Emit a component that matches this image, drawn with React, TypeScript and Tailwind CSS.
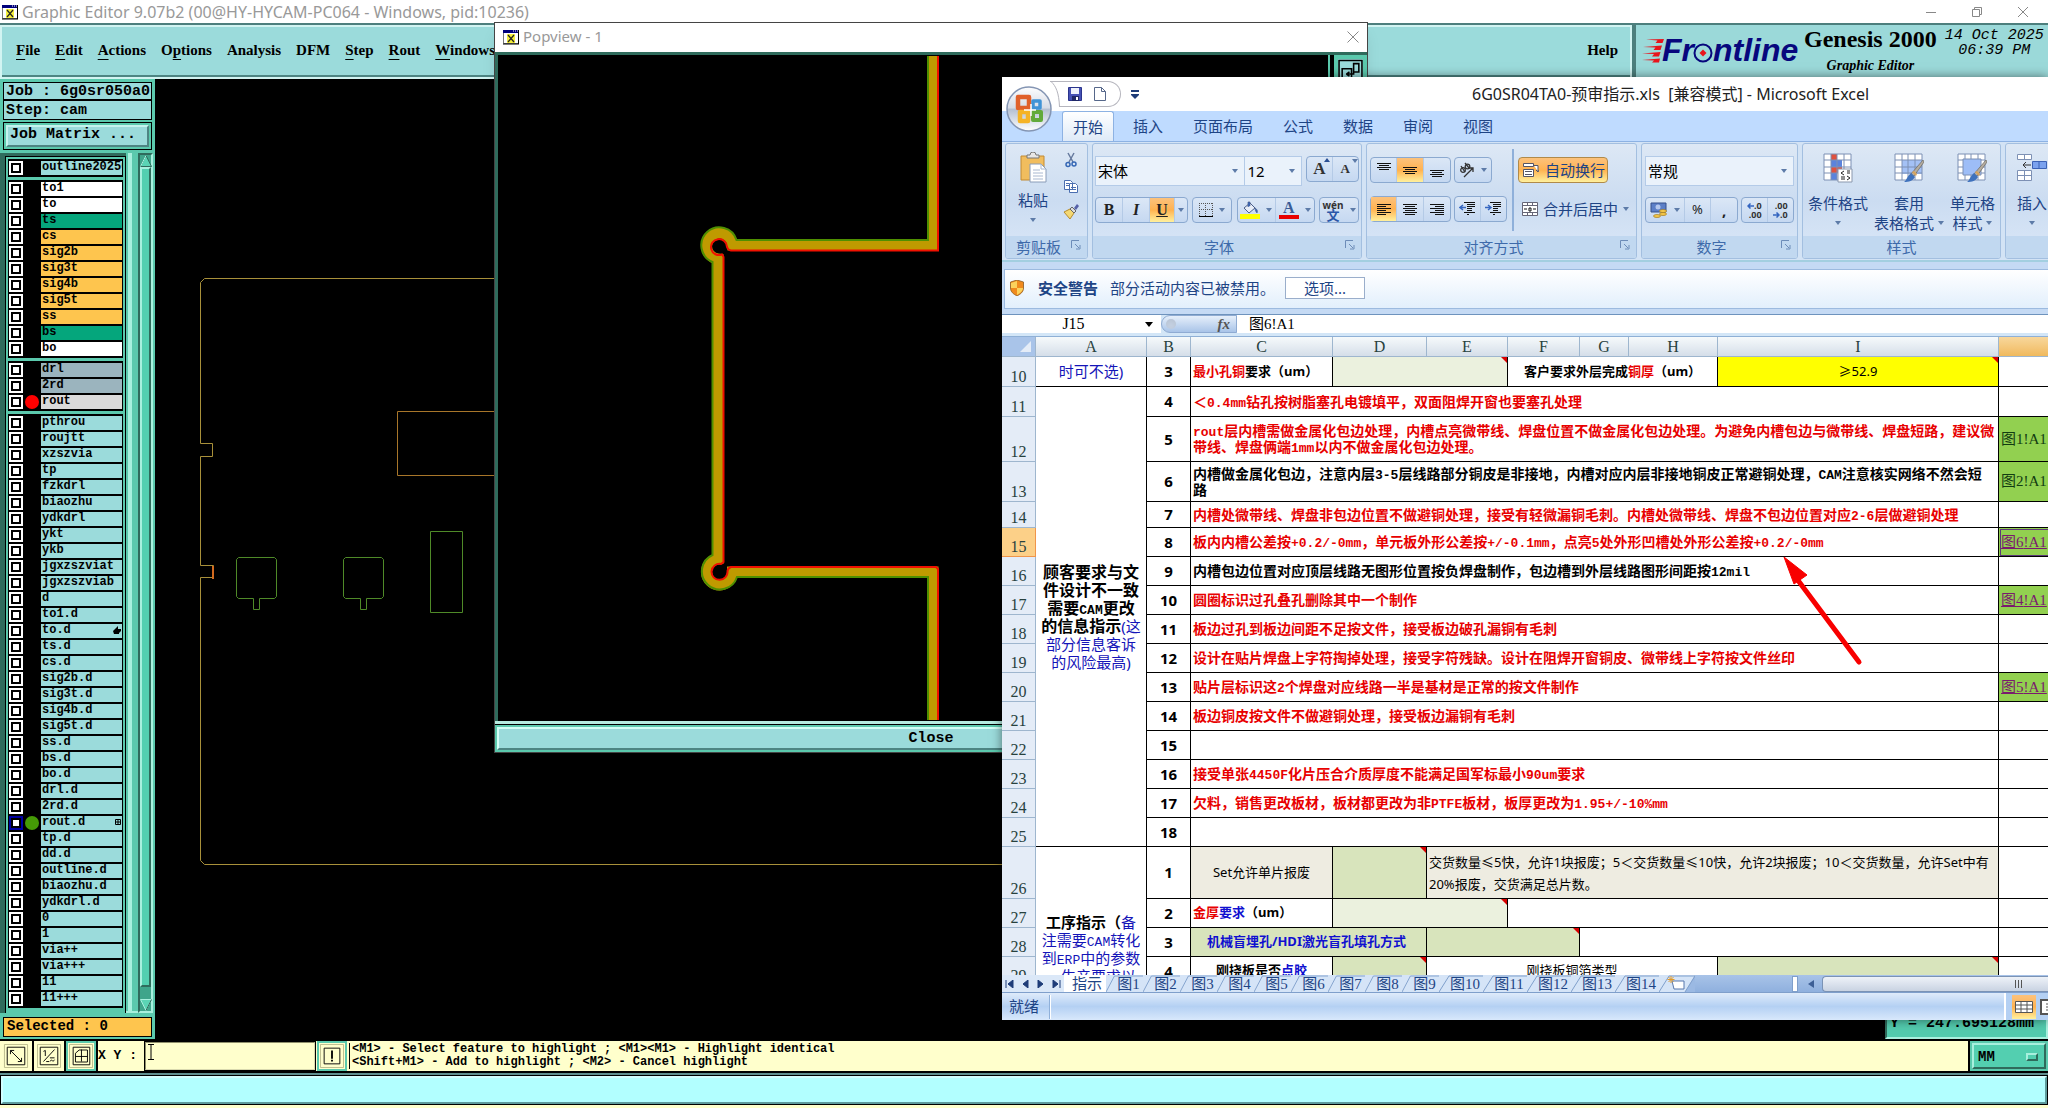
import { type ReactNode } from "react";

const ui = "font-['Noto_Sans','Noto_Sans_CJK_SC',sans-serif]";
const mono = "font-['Liberation_Mono',monospace]";
const serif = "font-['Liberation_Serif','Noto_Sans_CJK_SC',serif]";

type Layer = { name: string; color?: string; dot?: string; mark?: "hand" | "grid"; active?: boolean };

const white = "bg-white";
const green = "bg-[#05a67c]";
const amber = "bg-[#fec54e]";

const layerGroups: Layer[][] = [
  [{ name: "outline20250" }],
  [
    { name: "to1", color: white },
    { name: "to", color: white },
    { name: "ts", color: green },
    { name: "cs", color: amber },
    { name: "sig2b", color: amber },
    { name: "sig3t", color: amber },
    { name: "sig4b", color: amber },
    { name: "sig5t", color: amber },
    { name: "ss", color: amber },
    { name: "bs", color: green },
    { name: "bo", color: white },
  ],
  [
    { name: "drl", color: "bg-[#9bb4be]" },
    { name: "2rd", color: "bg-[#9bb4be]" },
    { name: "rout", color: "bg-[#dadada]", dot: "bg-[#ff0000]" },
  ],
  [
    { name: "pthrou" },
    { name: "roujtt" },
    { name: "xzszvia" },
    { name: "tp" },
    { name: "fzkdrl" },
    { name: "biaozhu" },
    { name: "ydkdrl" },
    { name: "ykt" },
    { name: "ykb" },
    { name: "jgxzszviat" },
    { name: "jgxzszviab" },
    { name: "d" },
    { name: "to1.d" },
    { name: "to.d", mark: "hand" },
    { name: "ts.d" },
    { name: "cs.d" },
    { name: "sig2b.d" },
    { name: "sig3t.d" },
    { name: "sig4b.d" },
    { name: "sig5t.d" },
    { name: "ss.d" },
    { name: "bs.d" },
    { name: "bo.d" },
    { name: "drl.d" },
    { name: "2rd.d" },
    { name: "rout.d", dot: "bg-[#459a06]", mark: "grid", active: true },
    { name: "tp.d" },
    { name: "dd.d" },
    { name: "outline.d" },
    { name: "biaozhu.d" },
    { name: "ydkdrl.d" },
    { name: "0" },
    { name: "1" },
    { name: "via++" },
    { name: "via+++" },
    { name: "11" },
    { name: "11+++" },
  ],
];

const menus: [string, string, string][] = [
  ["", "F", "ile"],
  ["", "E", "dit"],
  ["", "A", "ctions"],
  ["O", "p", "tions"],
  ["Analysis", "", ""],
  ["DFM", "", ""],
  ["", "S", "tep"],
  ["", "R", "out"],
  ["", "W", "indows"],
];

function AppIcon() {
  return (
    <svg viewBox="0 0 16 16" className="size-4 shrink-0">
      <path d="M0.500 1.500h15v13h-15z" fill="#fff" stroke="#777" />
      <path d="M0 1h15v3H0z" fill="#00007b" />
      <path d="M10 2h1m1 0h1m1 0h1" stroke="#fff" />
      <path d="M4 5h8v9H4z" fill="#f6f03c" />
      <path d="M5 6l6 7M11 6l-6 7" stroke="#222" strokeWidth="1.200" />
      <path d="M0 15h16M15.500 1v14" stroke="#000" />
    </svg>
  );
}

function TitleBar() {
  return (
    <div className={`flex h-[23px] shrink-0 items-center bg-white pl-0.5 text-[16px] text-[#999] ${ui}`}>
      <AppIcon />
      <h1 className="ml-1 flex-1 whitespace-nowrap">Graphic Editor 9.07b2 (00@HY-HYCAM-PC064 - Windows, pid:10236)</h1>
      <div className="flex items-center gap-9 pr-5 text-[#888]">
        <button aria-label="Minimize">
          <svg viewBox="0 0 10 10" className="size-2.5" stroke="currentColor">
            <path d="M0 5.500h10" />
          </svg>
        </button>
        <button aria-label="Restore">
          <svg viewBox="0 0 10 10" className="size-2.5" stroke="currentColor" fill="none">
            <path d="M0.500 2.500h7v7h-7zM2.500 2.500v-2h7v7h-2" />
          </svg>
        </button>
        <button aria-label="Close">
          <svg viewBox="0 0 10 10" className="size-2.5" stroke="currentColor">
            <path d="M0 0l10 10M10 0L0 10" />
          </svg>
        </button>
      </div>
    </div>
  );
}

function FrontlineLogo() {
  return (
    <svg viewBox="0 0 162 46" className="h-[46px] w-[162px] shrink-0" role="img" aria-label="Frontline">
      <g fill="#e8141c">
        <path d="M4 14.500L22 14l-1.500 4h-7l2-2.500z" />
        <path d="M1 22L20 20.500l-1.500 4.500h-7l2-2.500z" />
        <path d="M0 28.500L18.500 27 17 31.500h-7l2-2.500z" />
        <path d="M0 35L18 33.500l-1 4h-7l2-2z" />
      </g>
      <g fill="#07077d" className="font-['Liberation_Sans',sans-serif] font-bold italic" fontSize="32">
        <text x="20" y="36">Fr</text>
        <text x="71" y="36">ntline</text>
      </g>
      <circle cx="61" cy="28" r="8.500" fill="none" stroke="#07077d" strokeWidth="2" />
      <path d="M61 24.500l3.500 3.500-3.500 3.500-3.500-3.500z" fill="#e8141c" />
    </svg>
  );
}

function MenuBar() {
  return (
    <div className={`flex h-14 shrink-0 border-t-2 border-[#4d7f7d] bg-[#4d7f7d] font-bold text-black ${serif}`}>
      <nav className="flex flex-1 items-center gap-[15px] border-2 border-[#d2f4f2] bg-[#9bdbdb] px-3.5 pb-1 text-[15px] shadow-[inset_0_-2px_0_#4d8583]">
        {menus.map(([before, key, after]) => (
          <button key={before + key + after} className="whitespace-nowrap">
            {before}
            <span className={key ? "underline underline-offset-4" : ""}>{key}</span>
            {after}
          </button>
        ))}
        <button className="ml-auto -mr-0.5">Help</button>
      </nav>
      <div className="ml-1 flex w-[412px] bg-[#9bd9d9] pl-1.5">
        <FrontlineLogo />
        <div className="flex flex-col items-center leading-none whitespace-nowrap">
          <span className="pt-0.5 text-[24px]">Genesis 2000</span>
          <span className="pt-2 text-[14px] italic">Graphic Editor</span>
        </div>
        <div className={`ml-2 pt-[3px] text-center text-[15px] leading-[15px] font-normal whitespace-nowrap italic ${mono}`}>
          14 Oct 2025
          <br />
          06:39 PM
        </div>
      </div>
    </div>
  );
}

function LayerRow({ layer }: { layer: Layer }) {
  return (
    <label className="flex h-4 items-center">
      <input
        type="checkbox"
        className={`size-3.5 shrink-0 appearance-none border-2 bg-white shadow-[inset_0_0_0_2px_#000] ${layer.active ? "border-[#0000a0]" : "border-white"}`}
      />
      <span className="flex w-[18px] shrink-0 justify-center">
        {layer.dot && <span className={`size-3.5 rounded-full ${layer.dot}`} />}
      </span>
      <span
        className={`flex h-3.5 w-[81px] items-center justify-between overflow-hidden px-px pb-0.5 text-[12px] leading-[14px] ${layer.color ?? "bg-[#9bdbdb]"}`}
      >
        {layer.name}
        {layer.mark === "hand" && (
          <svg viewBox="0 0 8 8" className="size-2 shrink-0">
            <path d="M0 5l5-5v3h3v2L6 7v1H1z" />
          </svg>
        )}
        {layer.mark === "grid" && (
          <svg viewBox="0 0 6 6" className="size-1.5 shrink-0" fill="none" stroke="#000">
            <path d="M.5.5h5v5h-5zM3 0v6M0 3h6" />
          </svg>
        )}
      </span>
    </label>
  );
}

function LayerPanel() {
  return (
    <aside className={`flex w-[155px] shrink-0 flex-col bg-[#5bc9ad] px-[3px] pt-[3px] pb-0.5 font-bold text-black ${mono}`}>
      <div className="border border-black bg-[#9bdbdb] text-[15px] whitespace-nowrap">
        <div className="h-[18px] border-b-2 border-black pl-0.5 leading-[17px]">Job : 6g0sr050a0</div>
        <div className="h-[18px] pl-0.5 leading-5">Step: cam</div>
      </div>
      <div className="mt-0.5 border border-black p-0.5">
        <button className="block h-[22px] w-full border-2 border-t-[#c5f3ee] border-r-[#4d8583] border-b-[#4d8583] border-l-[#c5f3ee] bg-[#9bdbdb] pb-0.5 pl-0.5 text-left text-[15px] leading-4">
          Job Matrix ...
        </button>
      </div>
      <div className="-mx-[3px] mt-[3px] flex flex-1">
        <div className="w-[5px] bg-[#2f6b5c]" />
        <div className="flex flex-1 flex-col border-t-[3px] border-[#2f6b5c]">
          <div className="flex flex-1 flex-col gap-[3px] border-x border-t border-black bg-[#5bc9ad] px-0.5 pt-0.5">
            {layerGroups.map((group, i) => (
              <div key={i} className="bg-black py-px pl-px">
                {group.map((layer) => (
                  <LayerRow key={layer.name} layer={layer} />
                ))}
              </div>
            ))}
          </div>
        </div>
        <div className="flex w-3 border-b-2 border-[#a8f0de]">
          <div className="ml-0.5 w-1 bg-[#a8f0de]" />
        </div>
        <div className="mr-0.5 flex w-[15px] flex-col items-center border-2 border-t-[#2f6b5c] border-r-[#a8f0de] border-b-[#a8f0de] border-l-[#2f6b5c] bg-[#3fa58b]">
          <svg viewBox="0 0 12 12" className="size-3">
            <path d="M6 0.500L11.500 11.500h-11z" fill="#5bd4b5" stroke="#2f6b5c" />
            <path d="M6 0.500L.5 11.500" stroke="#a8f0de" />
          </svg>
          <div className="mb-3 w-full flex-1 border-2 border-t-[#a8f0de] border-r-[#2f6b5c] border-b-[#2f6b5c] border-l-[#a8f0de] bg-[#53cfb0]" />
          <svg viewBox="0 0 12 12" className="size-3">
            <path d="M0.500 .5h11L6 11.500z" fill="#5bd4b5" stroke="#a8f0de" />
            <path d="M11.500 .5L6 11.500" stroke="#2f6b5c" />
          </svg>
        </div>
      </div>
      <div className="mt-1 h-5 border border-black bg-[#fec54e] pl-[3px] text-[14px] leading-[16px]">Selected : 0</div>
    </aside>
  );
}

function BoardCanvas() {
  return (
    <main className="relative flex flex-1 items-end justify-end bg-black">
      <svg viewBox="155 80 850 958" className="absolute top-0 left-0 h-[958px] w-[850px]" fill="none">
        <path
          d="M1005 279.500H204.500l-4 4V444.500h12v13h-12V566.500h13v12h-13V861.500l4 4H1005"
          stroke="#a8903a"
        />
        <path d="M213 567v13" stroke="#d2691e" strokeWidth="2" />
        <path d="M500 412.500H397.500V476.500H500" stroke="#a8762a" />
        <g stroke="#4f8a28">
          <path d="M238.500 558.500h36l2 2v37l-2 2h-15v11h-6v-11h-15l-2-2v-37z" />
          <path d="M345.500 558.500h36l2 2v37l-2 2h-15v11h-6v-11h-15l-2-2v-37z" />
          <path d="M430.500 532.500h32v81h-32z" />
        </g>
      </svg>
      <output
        className={`h-8 w-[163px] border-2 border-t-[#2f6b5c] border-r-[#a8f0de] border-b-[#a8f0de] border-l-[#2f6b5c] bg-[#53cbae] pt-1 pl-[3px] text-[15px] font-bold whitespace-nowrap text-black ${mono}`}
      >
        Y = 247.695128mm
      </output>
    </main>
  );
}

function CommandBar() {
  return (
    <div className={`flex h-[34px] shrink-0 gap-0.5 border-y-2 border-black bg-black font-bold text-black ${mono}`}>
      <button aria-label="Zoom area" className="w-8 border-2 border-[#ffffcc] bg-[#ffffcc] p-px">
        <svg viewBox="0 0 26 26" className="h-full w-full" fill="none" stroke="#000">
          <path d="M0.500.5h25v25H.5z" stroke="#b9b98a" />
          <path d="M3.500 3.500h19v19h-19zM7 7l12 12M7 11V7h4M19 15v4h-4" />
        </svg>
      </button>
      <button aria-label="Pan" className="w-[30px] border-2 border-[#ffffcc] bg-[#ffffcc] p-px">
        <svg viewBox="0 0 26 26" className="h-full w-full" fill="none" stroke="#000">
          <path d="M0.500.5h25v25H.5z" stroke="#b9b98a" />
          <path d="M3.500 3.500h19v19h-19zM7 19L19 6M7 8l2-1v6M14 15h5M14 19c2-4 3 2 5-2M10 19h3" />
        </svg>
      </button>
      <button aria-label="Grid" className="w-[30px] border-2 border-[#5bc9ad] bg-[#ffffcc] p-px">
        <svg viewBox="0 0 26 26" className="h-full w-full" fill="none" stroke="#000">
          <path d="M0.500.5h25v25H.5z" stroke="#b9b98a" />
          <path d="M4.500 3.500h18v19h-18zM11 6.500h9v13H7V10zM7 13.500h13M13.500 6v13" />
        </svg>
      </button>
      <div className="flex flex-1 items-center bg-[#ffffcc]">
        <label htmlFor="xy" className="w-[46px] text-[13px] whitespace-pre">
          X Y :
        </label>
        <input
          id="xy"
          defaultValue=""
          className="h-[30px] w-[172px] border-2 border-t-[#8f8f6c] border-r-[#d9d9ae] border-b-[#d9d9ae] border-l-[#8f8f6c] bg-[#ffffcc] outline-1 -outline-offset-1 outline-black"
        />
        <svg viewBox="0 0 6 16" className="-ml-[168px] mb-2 h-4 w-1.5 shrink-0" fill="none" stroke="#000">
          <path d="M0 .5h6M0 15.500h6M3 0v16" />
        </svg>
        <button aria-label="Alert" className="ml-[163px] h-[30px] w-[30px] shrink-0 border-2 border-[#5bc9ad] bg-[#ffffcc] p-px">
          <svg viewBox="0 0 26 26" className="h-full w-full" fill="none" stroke="#000">
            <path d="M0.500.5h25v25H.5z" stroke="#b9b98a" />
            <path d="M4.500 4.500h17v17h-17z" />
            <path d="M13 7v9M13 17v2" strokeWidth="2" />
          </svg>
        </button>
        <div className="ml-0.5 flex-1 border-l border-black pl-0.5 text-[12px] leading-[13px] whitespace-pre">
          {"<M1> - Select feature to highlight ; <M1><M1> - Highlight identical\n<Shift+M1> - Add to highlight ; <M2> - Cancel highlight"}
        </div>
      </div>
      <div className="w-[78px] bg-[#5bc9ad] p-0.5">
        <div className="relative h-full border-2 border-t-[#a8f0de] border-r-[#2f6b5c] border-b-[#2f6b5c] border-l-[#a8f0de] bg-[#53cfb0]">
          <select aria-label="Units" className="h-full w-full appearance-none pl-1 text-[14px]">
            <option>MM</option>
          </select>
          <span className="pointer-events-none absolute top-2 right-1.5 h-2 w-3 border-2 border-t-[#a8f0de] border-r-[#2f6b5c] border-b-[#2f6b5c] border-l-[#a8f0de]" />
        </div>
      </div>
    </div>
  );
}

function Popview() {
  return (
    <section className="absolute top-[22px] left-[494px] flex h-[731px] w-[874px] flex-col border border-[#444] bg-black shadow-lg">
      <div className={`flex h-[29px] shrink-0 items-center bg-white pr-2 pb-0.5 pl-2 text-[15px] text-[#999] ${ui}`}>
        <AppIcon />
        <h2 className="ml-1 flex-1">Popview - 1</h2>
        <button aria-label="Close">
          <svg viewBox="0 0 12 12" className="size-3" stroke="#888">
            <path d="M.5.5l11 11M11.500.5l-11 11" />
          </svg>
        </button>
      </div>
      <div className="flex flex-1 border-t-[3px] border-l-[3px] border-[#2f6b5c]">
        <div className="flex-1 border-r-2 border-[#5bc9ad]">
          <svg viewBox="498 55 830 666" className="h-[666px] w-[830px]" fill="none">
            <path
              d="M933 56V245H732.500A13 13 0 1 0 718 259V559A13 13 0 1 0 732.500 572H933V720"
              stroke="#bf9a00"
              strokeWidth="11"
            />
            <path
              d="M928 56V240H736.500A18 18 0 1 0 712.500 262V555A18 18 0 1 0 737 577H928V720"
              stroke="#4f8f00"
              strokeWidth="2"
            />
            <path
              d="M938 56V250.500H731Q728 250 727 247A8 8 0 1 0 722 254.500L723.500 257V562L721 564A8 8 0 1 0 727.500 571Q728 568 731 567H936L938 569V720"
              stroke="#f01000"
              strokeWidth="2"
            />
          </svg>
        </div>
        <button aria-label="Swap view" className="ml-1 h-9 w-[33px] border-4 border-[#5bc9ad] bg-[#9bdbdb]">
          <svg viewBox="0 0 24 26" className="h-full w-full" fill="none" stroke="#000" strokeWidth="1.500">
            <path d="M1 1h22v24H1zM4 9h9v10H4zM15 4h5v8h-5zM8 14h7V8M8 14l3-2M8 14l3 2" />
          </svg>
        </button>
      </div>
      <div className="shrink-0 border-t-[3px] border-[#b5ece0] bg-black pt-px">
        <div className="border-2 border-[#5bc9ad]">
          <button
            className={`block h-[23px] w-full border-2 border-t-[#d2fff6] border-r-[#4d8583] border-b-[#4d8583] border-l-[#d2fff6] bg-[#9bdbdb] text-[15px] leading-[18px] font-bold text-black ${mono}`}
          >
            Close
          </button>
        </div>
      </div>
    </section>
  );
}

// ---- spreadsheet window ----

const box = "flex h-[26px] items-center rounded-sm border border-[#8ba9d0] bg-linear-to-b from-[#dbe7f6] to-[#c5d8f1] divide-x divide-[#b4cae6]";
const hot = "bg-linear-to-b from-[#fcc27c] via-[#ffb24f] to-[#fff09c]";

function Caret({ className = "" }: { className?: string }) {
  return (
    <svg viewBox="0 0 6 4" className={`h-1 w-1.5 shrink-0 ${className}`}>
      <path d="M0 0h6L3 4z" fill="#5d7ba8" />
    </svg>
  );
}

function IconButton({ label, className = "", children }: { label: string; className?: string; children: ReactNode }) {
  return (
    <button aria-label={label} className={`flex h-6 items-center justify-center gap-1.5 ${className}`}>
      {children}
    </button>
  );
}

function Group({ title, className, launcher = true, children }: { title: string; className: string; launcher?: boolean; children: ReactNode }) {
  return (
    <section className={`flex h-[116px] shrink-0 flex-col overflow-hidden rounded-[3px] border border-[#a3bfe0] bg-linear-to-b from-[#dde8f5] via-[#cbdcf1] to-[#dbe8f8] ${className}`}>
      <div className="h-[92px] shrink-0">{children}</div>
      <div className="flex h-[22px] items-center bg-[#c1d8f0] text-[15px] text-[#3e6aaa]">
        <h3 className="flex-1 text-center whitespace-nowrap">{title}</h3>
        {launcher && (
          <svg viewBox="0 0 10 10" className="mr-1.5 mb-1 size-2.5 shrink-0" fill="none" stroke="#6d8cb8">
            <path d="M0.500 8V.5H8M4 4l4 4M9 5v4H5" />
          </svg>
        )}
      </div>
    </section>
  );
}

function Lines({ widths, top = 4 }: { widths: [number, number][]; top?: number }) {
  return (
    <svg viewBox="0 0 16 18" className="h-[18px] w-4" stroke="#111" strokeWidth="1">
      {widths.map(([from, to], i) => (
        <path key={i} d={`M${from} ${top + i * 2 + 0.5}H${to}`} />
      ))}
    </svg>
  );
}

const short: [number, number][] = [[1, 15], [3, 13], [1, 15], [3, 13]];
const leftLines: [number, number][] = [[1, 15], [1, 10], [1, 15], [1, 10], [1, 15], [1, 10]];
const centerLines: [number, number][] = [[1, 15], [3, 13], [1, 15], [3, 13], [1, 15], [3, 13]];
const rightLines: [number, number][] = [[1, 15], [6, 15], [1, 15], [6, 15], [1, 15], [6, 15]];

function IndentIcon({ flip = false }: { flip?: boolean }) {
  return (
    <svg viewBox="0 0 16 14" className="h-3.5 w-4" stroke="#111" fill="none">
      <path d="M5 .5h11M8 2.500h8M8 4.500h8M8 6.500h5M8 8.500h5M5 10.500h11M8 12.500h2" />
      <path d={flip ? "M0 5.500h5M3 3l3 2.500L3 8" : "M1 5.500h6M4 3L1 5.500 4 8"} stroke="#3566c0" strokeWidth="1.500" />
    </svg>
  );
}

function Combo({ label, value, className }: { label: string; value: string; className: string }) {
  return (
    <div className={`relative h-[30px] border border-[#b4cbe8] bg-[#eaf2fb] ${className}`}>
      <select aria-label={label} className="h-full w-full appearance-none pl-0.5 text-[15px] text-black">
        <option>{value}</option>
      </select>
      <Caret className="pointer-events-none absolute top-3 right-1.5" />
    </div>
  );
}

function GridIcon({ kind }: { kind: "cond" | "table" | "cell" }) {
  return (
    <svg viewBox="0 0 30 30" className="size-[30px]">
      <path d="M1 1h27v26H1z" fill="#fff" />
      {kind === "cond" && (
        <>
          <path d="M8 1h6v6H8zM8 14h11v6H8z" fill="#e0523f" />
          <path d="M8 7h11v7H8zM8 20h6v7H8z" fill="#5b83dc" />
        </>
      )}
      {kind === "table" && <path d="M8 7h20v14H8z" fill="#a4c1f5" />}
      <path d="M1 1h27v26H1zM1 7h27M1 14h27M1 20h27M8 1v26M14 1v26M21 1v26" fill="none" stroke="#7d90b4" />
      {kind === "cell" && <path d="M6 6h18v16H6z" fill="#9dbdf7" stroke="#7d90b4" />}
      {kind === "cond" ? (
        <>
          <path d="M15 16h14v13H15z" fill="#fff" stroke="#8a97ad" />
          <path d="M21 18l-3 2 3 2M18 24h4M18 26h4M24 18h3M24 20h3M24 23l3 2-3 2" fill="none" stroke="#222" />
        </>
      ) : (
        <>
          <path d="M29 7l1 2-10 14-3-2z" fill="#b5ada0" stroke="#6a655c" strokeWidth=".7" />
          <path d="M17 20l4 4c-2 4-6 5-11 5 3-2 3-6 7-9z" fill="#3f72bd" />
          <path d="M18 19l4 4 1-2-3-3z" fill="#d9a45c" />
        </>
      )}
    </svg>
  );
}

function Ribbon() {
  return (
    <div className="flex h-[121px] shrink-0 gap-1 overflow-hidden border-t border-b-2 border-t-[#8db2e3] border-b-[#a3cfe0] bg-[#d3e3f5] px-[3px] pt-px text-[15px] text-[#1e4485]">
      <Group title="剪贴板" className="w-[83px]">
        <div className="flex justify-between pt-2 pr-2 pl-3">
          <button className="flex flex-col items-center">
            <svg viewBox="0 0 30 32" className="h-8 w-[30px]">
              <path d="M3 4h23v24H3z" fill="#f1bd5e" stroke="#c28a33" />
              <path d="M9 6V3h3a3 3 0 0 1 6 0h3v3z" fill="#e7e7e7" stroke="#777" />
              <path d="M12 12h11l5 5v13H12z" fill="#fff" stroke="#8a9cb8" />
              <path d="M23 12v5h5M15 18h7M15 21h10M15 24h10M15 27h10" fill="none" stroke="#a9b8d0" />
            </svg>
            <span className="mt-1 leading-6">粘贴</span>
            <Caret className="mt-1.5" />
          </button>
          <div className="flex flex-col gap-2.5">
            <button aria-label="剪切">
              <svg viewBox="0 0 16 16" className="size-4" fill="none" stroke="#3567b5" strokeWidth="1.500">
                <path d="M5 1l5 9M11 1L6 10" stroke="#667a9e" />
                <circle cx="5" cy="12.500" r="2" />
                <circle cx="11" cy="12" r="2" />
              </svg>
            </button>
            <button aria-label="复制">
              <svg viewBox="0 0 16 16" className="size-4" fill="#fff" stroke="#4a6eb0">
                <path d="M1.500 2.500h6l2 2v7h-8zM6.500 5.500h6l2 2v7h-8z" />
                <path d="M3 5.500h3M3 7.500h3M8 9.500h5M8 11.500h5" />
              </svg>
            </button>
            <button aria-label="格式刷">
              <svg viewBox="0 0 16 16" className="size-4">
                <path d="M1 8l6-3 4 4-4 6z" fill="#f4d873" stroke="#b58a2c" />
                <path d="M7 5l2-2 4 4-2 2z" fill="#dcdcdc" stroke="#666" />
                <path d="M11 4l3-4 2 2-3 4z" fill="#5460a8" />
              </svg>
            </button>
          </div>
        </div>
      </Group>

      <Group title="字体" className="w-[270px]">
        <div className="flex flex-col gap-[11px] px-0.5 pt-3">
          <div className="flex">
            <Combo label="字体名称" value="宋体" className="w-[151px]" />
            <Combo label="字号" value="12" className="w-[57px] border-l-0" />
            <div className={`${box} ml-1 w-[53px] ${serif} font-bold text-[#333]`}>
              <IconButton label="增大字号" className="w-1/2 text-[17px]">
                <span className="relative">
                  A
                  <svg viewBox="0 0 6 4" className="absolute top-0.5 -right-1 h-1 w-1.5">
                    <path d="M0 4h6L3 0z" fill="#2a4f94" />
                  </svg>
                </span>
              </IconButton>
              <IconButton label="减小字号" className="w-1/2 text-[13px]">
                <span className="relative">
                  A<Caret className="absolute top-0 -right-2" />
                </span>
              </IconButton>
            </div>
          </div>
          <div className="flex justify-between">
            <div className={`${box} w-[93px] ${serif} text-[16px] font-bold text-[#222]`}>
              <IconButton label="加粗" className="w-[27px]">B</IconButton>
              <IconButton label="倾斜" className="w-[27px] italic">I</IconButton>
              <IconButton label="下划线" className={`w-[25px] underline ${hot}`}>U</IconButton>
              <IconButton label="下划线样式" className="w-3"><Caret /></IconButton>
            </div>
            <div className={`${box} w-10`}>
              <IconButton label="边框" className="w-full">
                <svg viewBox="0 0 14 14" className="size-3.5" stroke="#555" strokeDasharray="1 1">
                  <path d="M0 .5h14M0 6.500h14M.5 0v13M6.500 0v13M13.500 0v13" />
                  <path d="M0 13.500h14" stroke="#000" strokeDasharray="none" />
                </svg>
                <Caret />
              </IconButton>
            </div>
            <div className={`${box} w-[78px]`}>
              <IconButton label="填充颜色" className="w-[39px]">
                <svg viewBox="0 0 20 18" className="h-[18px] w-5">
                  <path d="M4 7l6-5 5 5-6 5z" fill="#e8eef8" stroke="#4a5f8a" />
                  <path d="M8 6V1h2v4M15 7c2 1 3 3 2 5-1-1-2-3-2-5z" fill="#3566c0" stroke="#4a5f8a" strokeWidth=".7" />
                  <path d="M0 13h20v5H0z" fill="#ffff00" />
                </svg>
                <Caret />
              </IconButton>
              <IconButton label="字体颜色" className="w-[39px]">
                <span className={`flex w-5 flex-col items-center text-[16px] leading-[14px] font-bold text-[#3a5c96] ${serif}`}>
                  A
                  <span className="h-1 w-full bg-[#e80000]" />
                </span>
                <Caret />
              </IconButton>
            </div>
            <div className={`${box} w-10`}>
              <IconButton label="拼音" className="w-full">
                <span className="text-center text-[10px] leading-[10px] font-bold text-[#333]">
                  wén
                  <br />
                  <span className="text-[13px] text-[#2a56a8]">文</span>
                </span>
                <Caret />
              </IconButton>
            </div>
          </div>
        </div>
      </Group>

      <Group title="对齐方式" className="w-[271px]">
        <div className="flex pt-[13px] pl-[3px]">
          <div className="flex flex-col gap-[13px]">
            <div className="flex gap-[3px]">
              <div className={`${box} w-[81px]`}>
                <IconButton label="顶端对齐" className="w-[27px]"><Lines widths={short} top={2} /></IconButton>
                <IconButton label="垂直居中" className={`w-[27px] ${hot}`}><Lines widths={short} top={6} /></IconButton>
                <IconButton label="底端对齐" className="w-[27px]"><Lines widths={short} top={9} /></IconButton>
              </div>
              <div className={`${box} w-[38px]`}>
                <IconButton label="方向" className="w-full">
                  <svg viewBox="0 0 16 16" className="size-4" fill="none" stroke="#333" strokeWidth="1.300">
                    <circle cx="4" cy="8" r="2.300" />
                    <circle cx="8.500" cy="4.500" r="2.300" />
                    <path d="M2 4l4 6M6 1l4 5M5 15L14 6M14 10V6h-4" />
                  </svg>
                  <Caret />
                </IconButton>
              </div>
            </div>
            <div className="flex gap-[3px]">
              <div className={`${box} w-[81px]`}>
                <IconButton label="左对齐" className={`w-[27px] ${hot}`}><Lines widths={leftLines} /></IconButton>
                <IconButton label="居中" className="w-[27px]"><Lines widths={centerLines} /></IconButton>
                <IconButton label="右对齐" className="w-[27px]"><Lines widths={rightLines} /></IconButton>
              </div>
              <div className={`${box} w-[53px]`}>
                <IconButton label="减少缩进" className="w-[26px]"><IndentIcon /></IconButton>
                <IconButton label="增加缩进" className="w-[26px]"><IndentIcon flip /></IconButton>
              </div>
            </div>
          </div>
          <div className="-mt-2 mr-1 ml-[5px] h-[82px] w-0.5 bg-[#8fb0da]" />
          <div className="flex flex-col gap-[13px]">
            <button className={`flex h-[26px] w-[90px] items-center gap-1.5 rounded-sm border border-[#b08a4a] pl-1 whitespace-nowrap ${hot}`}>
              <svg viewBox="0 0 16 16" className="size-4 shrink-0" fill="#fff" stroke="#556">
                <path d="M0.500 1.500h10v3h-10zM.5 7.500h10v7h-10zM2 9.500h7M2 12.500h7M11 3.500h4v6M13 8l2 2 1-2" />
              </svg>
              自动换行
            </button>
            <button className="flex h-[26px] items-center gap-[5px] pl-1 whitespace-nowrap">
              <svg viewBox="0 0 16 16" className="size-4 shrink-0" fill="#fff" stroke="#667">
                <path d="M.5 1.500h15v13H.5zM.5 4.500h15M.5 11.500h15M5.500 1v3M10.500 1v3M5.500 12v3M10.500 12v3" />
                <path d="M2 8h3M11 8h3M7 7h2v3H7z" stroke="#111" />
              </svg>
              合并后居中
              <Caret />
            </button>
          </div>
        </div>
      </Group>

      <Group title="数字" className="w-[157px]">
        <div className="flex flex-col gap-[11px] px-[3px] pt-3">
          <Combo label="数字格式" value="常规" className="w-full" />
          <div className="flex justify-between">
            <div className={`${box} w-[93px] text-[15px] text-[#222]`}>
              <IconButton label="会计数字格式" className="w-[39px]">
                <svg viewBox="0 0 18 18" className="size-[18px]">
                  <path d="M1 2h15v9H1z" fill="#5c7fc7" stroke="#34508c" />
                  <circle cx="8" cy="6" r="2.500" fill="#b5c8ee" />
                  <ellipse cx="13" cy="10" rx="3.500" ry="1.500" fill="#f5c84a" stroke="#a37a1c" strokeWidth=".7" />
                  <ellipse cx="13" cy="13" rx="3.500" ry="1.500" fill="#f5c84a" stroke="#a37a1c" strokeWidth=".7" />
                  <ellipse cx="7" cy="15" rx="3.500" ry="1.500" fill="#f5c84a" stroke="#a37a1c" strokeWidth=".7" />
                </svg>
                <Caret />
              </IconButton>
              <IconButton label="百分比样式" className="w-[27px] text-[13px]">%</IconButton>
              <IconButton label="千位分隔样式" className="w-[26px] font-bold">,</IconButton>
            </div>
            <div className={`${box} w-[53px] text-[9px] font-bold text-[#333]`}>
              <IconButton label="增加小数位数" className="w-[26px]">
                <span className="flex flex-col items-end leading-[9px]">
                  <span className="flex items-center">
                    <svg viewBox="0 0 7 6" className="h-1.5 w-[7px]" fill="none" stroke="#3566c0" strokeWidth="1.500">
                      <path d="M7 3H1M3.500.5L1 3l2.500 2.500" />
                    </svg>
                    .0
                  </span>
                  <span>.00</span>
                </span>
              </IconButton>
              <IconButton label="减少小数位数" className="w-[26px]">
                <span className="flex flex-col items-end leading-[9px]">
                  <span>.00</span>
                  <span className="flex items-center">
                    <svg viewBox="0 0 7 6" className="h-1.5 w-[7px]" fill="none" stroke="#3566c0" strokeWidth="1.500">
                      <path d="M0 3h6M3.500.5L6 3 3.500 5.500" />
                    </svg>
                    .0
                  </span>
                </span>
              </IconButton>
            </div>
          </div>
        </div>
      </Group>

      <Group title="样式" className="w-[199px]" launcher={false}>
        <div className="flex justify-between px-[5px] pt-[9px] leading-5 whitespace-nowrap">
          <button className="flex flex-col items-center">
            <GridIcon kind="cond" />
            <span className="mt-2.5">条件格式</span>
            <Caret className="mt-2" />
          </button>
          <button className="flex flex-col items-center">
            <GridIcon kind="table" />
            <span className="mt-2.5">套用</span>
            <span className="flex items-center gap-1">表格格式<Caret /></span>
          </button>
          <button className="flex flex-col items-center">
            <GridIcon kind="cell" />
            <span className="mt-2.5">单元格</span>
            <span className="flex items-center gap-1">样式<Caret /></span>
          </button>
        </div>
      </Group>

      <Group title="" className="w-[180px]" launcher={false}>
        <button className="ml-[11px] flex flex-col items-center pt-[9px] leading-5">
          <svg viewBox="0 0 30 30" className="size-[30px]" fill="#fff" stroke="#7d90b4">
            <path d="M.5 1.500h14v5H.5zM7.500 1v6M.5 17.500h14v10H.5zM7.500 17v11M.5 22.500h14" />
            <path d="M15.500 8.500h14v7h-14zM22 8v8" fill="#7ba2ee" stroke="#3c62b5" />
            <path d="M6 12h8M9 9l-3 3 3 3" stroke="#333" fill="none" />
          </svg>
          <span className="mt-2.5">插入</span>
          <Caret className="mt-2" />
        </button>
      </Group>
    </div>
  );
}

function OfficeButton() {
  return (
    <button aria-label="Office" className="absolute top-[9px] left-1 z-10 size-[46px]">
      <svg viewBox="0 0 46 46" className="size-full">
        <defs>
          <linearGradient id="orb" x1="0" y1="0" x2="0" y2="1">
            <stop offset="0" stopColor="#fdfdfe" />
            <stop offset=".48" stopColor="#d5dbe6" />
            <stop offset=".5" stopColor="#b3bfd1" />
            <stop offset="1" stopColor="#fff" />
          </linearGradient>
        </defs>
        <circle cx="23" cy="23" r="22" fill="url(#orb)" stroke="#8495b3" strokeWidth="1.500" />
        <g fill="none" strokeWidth="4.500" strokeLinejoin="round">
          <path d="M12 11h11v11H12z" stroke="#e0602a" />
          <path d="M27 15h7v7h-7z" stroke="#3f93d6" strokeWidth="3.500" />
          <path d="M14 26h8v9h-8z" stroke="#f5b325" />
          <path d="M27 26h8v8h-8z" stroke="#62aa3a" strokeWidth="4" />
        </g>
        <path d="M18 24h12M25 18v12" stroke="#fff" strokeWidth="1.500" />
      </svg>
    </button>
  );
}

function ExcelTitle() {
  return (
    <div className="flex h-[34px] shrink-0 items-center bg-white pl-12">
      <svg viewBox="0 0 10 26" className="h-[26px] w-2.5" fill="none" stroke="#b5b5bd">
        <path d="M0 .5h10M1 .5C6 5 9 12 9.500 26" />
      </svg>
      <div className="flex h-[26px] w-[61px] items-center gap-3 rounded-r-full border border-l-0 border-[#b5b5bd] pl-2">
        <button aria-label="保存">
          <svg viewBox="0 0 14 14" className="size-3.5">
            <path d="M.5.5h13v13H.5z" fill="#4651b5" stroke="#2b348c" />
            <path d="M3 1h8v6H3z" fill="#eef1fb" />
            <path d="M4 9h7v5H4z" fill="#1f2766" />
            <path d="M8 10h2v3H8z" fill="#fff" />
          </svg>
        </button>
        <button aria-label="新建">
          <svg viewBox="0 0 12 14" className="h-3.5 w-3" fill="#fff" stroke="#56678a">
            <path d="M.5.5h7l4 4v9H.5zM7.500.5v4h4" />
          </svg>
        </button>
      </div>
      <button aria-label="自定义快速访问工具栏" className="ml-2.5">
        <svg viewBox="0 0 8 9" className="h-[9px] w-2" fill="#1e3c78">
          <path d="M0 0h8v2H0zM0 4h8v1L4 9 0 5z" />
        </svg>
      </button>
      <h2 className="ml-[333px] text-[16px] whitespace-pre text-[#222]">6G0SR04TA0-预审指示.xls  [兼容模式] - Microsoft Excel</h2>
    </div>
  );
}

function RibbonTabs() {
  return (
    <div className="flex h-[30px] shrink-0 bg-[#bfdbff] pl-[60px] text-[15px] text-[#1e4485]">
      <button className="h-[31px] w-[52px] rounded-t-[3px] border border-b-0 border-[#8db2e3] bg-linear-to-b from-white to-[#dde9f7]">开始</button>
      <div className="flex gap-[30px] pl-[19px]">
        {["插入", "页面布局", "公式", "数据", "审阅", "视图"].map((tab) => (
          <button key={tab}>{tab}</button>
        ))}
      </div>
    </div>
  );
}

function SecurityBar() {
  return (
    <div className="h-[52px] shrink-0 bg-[#c5daf4] pt-[7px] pb-[5px] pl-0.5">
      <div className="flex h-10 items-center border border-r-0 border-[#9cbadf] bg-linear-to-b from-white to-[#e2effc] pb-0.5 pl-[5px] text-[15px] text-[#1e4485]">
        <svg viewBox="0 0 14 16" className="h-4 w-3.5">
          <path d="M7 0l6.500 2v6c0 4-3 6-6.500 8C3.500 14 .5 12 .5 8V2z" fill="#f08a1d" stroke="#8a5a20" strokeWidth=".8" />
          <path d="M7 1v7H1V3z" fill="#fbd25c" />
          <path d="M7 8h6c0 3-3 5-6 7z" fill="#fbd25c" />
        </svg>
        <strong className="ml-3.5">安全警告</strong>
        <span className="ml-3">部分活动内容已被禁用。</span>
        <button className="ml-2.5 h-[22px] w-20 border border-[#9aaecb] bg-white leading-5">选项...</button>
      </div>
    </div>
  );
}

function FormulaBar() {
  return (
    <div className={`flex h-[23px] shrink-0 border-y border-[#6e93bd] border-b-[#8fb0d6] bg-[#d3e6f7] pb-[3px] text-[16px] text-black ${serif}`}>
      <div className="flex w-[159px] items-center bg-white pr-2">
        <input aria-label="名称框" defaultValue="J15" className="h-[18px] w-0 flex-1 text-center" />
        <svg viewBox="0 0 8 5" className="h-[5px] w-2">
          <path d="M0 0h8L4 5z" />
        </svg>
      </div>
      <div className="flex w-[76px] items-center justify-between rounded-l-full border border-[#8fabd2] bg-linear-to-b from-[#e6effa] to-[#a9c4e8] pr-1.5 pl-1">
        <span className="size-2.5 rounded-full bg-[#c3cfe0] shadow-inner" />
        <span className="text-[15px] font-bold text-[#555] italic">fx</span>
      </div>
      <label htmlFor="formula" className="sr-only">编辑栏</label>
      <input id="formula" defaultValue="图6!A1" className="min-w-0 flex-1 bg-white pl-3 text-[15px]" />
    </div>
  );
}

// Half-width runs use the monospace face, so two of them take about one CJK cell.
function Mixed({ text }: { text: string }) {
  return (
    <>
      {text.split(/([\x20-\x7e]+)/).map((part, i) =>
        i % 2 ? (
          <span key={i} className={`text-[13px] leading-none ${mono}`}>
            {part}
          </span>
        ) : (
          part
        )
      )}
    </>
  );
}

function Flag() {
  return <span className="absolute top-0 right-0 border-t-[6px] border-l-[6px] border-t-[#d80000] border-l-transparent" />;
}

type Note = { row: number; no: number; height: string; lines: string[]; black?: boolean; link?: string; visited?: boolean };

const notes: Note[] = [
  { row: 11, no: 4, height: "h-[30px]", lines: ["＜0.4mm钻孔按树脂塞孔电镀填平，双面阻焊开窗也要塞孔处理"] },
  {
    row: 12,
    no: 5,
    height: "h-[45px]",
    lines: [
      "rout层内槽需做金属化包边处理，内槽点亮微带线、焊盘位置不做金属化包边处理。为避免内槽包边与微带线、焊盘短路，建议微",
      "带线、焊盘俩端1mm以内不做金属化包边处理。",
    ],
    link: "1",
  },
  {
    row: 13,
    no: 6,
    height: "h-10",
    lines: ["内槽做金属化包边，注意内层3-5层线路部分铜皮是非接地，内槽对应内层非接地铜皮正常避铜处理，CAM注意核实网络不然会短", "路"],
    black: true,
    link: "2",
  },
  { row: 14, no: 7, height: "h-[26px]", lines: ["内槽处微带线、焊盘非包边位置不做避铜处理，接受有轻微漏铜毛刺。内槽处微带线、焊盘不包边位置对应2-6层做避铜处理"] },
  { row: 15, no: 8, height: "h-[29px]", lines: ["板内内槽公差按+0.2/-0mm，单元板外形公差按+/-0.1mm，点亮5处外形凹槽处外形公差按+0.2/-0mm"], link: "6", visited: true },
  { row: 16, no: 9, height: "h-[29px]", lines: ["内槽包边位置对应顶层线路无图形位置按负焊盘制作，包边槽到外层线路图形间距按12mil"], black: true },
  { row: 17, no: 10, height: "h-[29px]", lines: ["圆圈标识过孔叠孔删除其中一个制作"], link: "4", visited: true },
  { row: 18, no: 11, height: "h-[29px]", lines: ["板边过孔到板边间距不足按文件，接受板边破孔漏铜有毛刺"] },
  { row: 19, no: 12, height: "h-[29px]", lines: ["设计在贴片焊盘上字符掏掉处理，接受字符残缺。设计在阻焊开窗铜皮、微带线上字符按文件丝印"] },
  { row: 20, no: 13, height: "h-[29px]", lines: ["贴片层标识这2个焊盘对应线路一半是基材是正常的按文件制作"], link: "5", visited: true },
  { row: 21, no: 14, height: "h-[29px]", lines: ["板边铜皮按文件不做避铜处理，接受板边漏铜有毛刺"] },
  { row: 22, no: 15, height: "h-[29px]", lines: [] },
  { row: 23, no: 16, height: "h-[29px]", lines: ["接受单张4450F化片压合介质厚度不能满足国军标最小90um要求"] },
  { row: 24, no: 17, height: "h-[29px]", lines: ["欠料，销售更改板材，板材都更改为非PTFE板材，板厚更改为1.95+/-10%mm"] },
  { row: 25, no: 18, height: "h-[29px]", lines: [] },
];

const columns: [string, string][] = [
  ["A", "w-[111px]"],
  ["B", "w-[44px]"],
  ["C", "w-[142px]"],
  ["D", "w-[94px]"],
  ["E", "w-[81px]"],
  ["F", "w-[72px]"],
  ["G", "w-[49px]"],
  ["H", "w-[89px]"],
  ["I", "w-[281px]"],
  ["J", "w-[120px]"],
];

const cell = "relative border-r border-b border-black p-0";
const numCell = `${cell} text-center text-[15px] font-bold`;

function RowHead({ n, active = false }: { n: number; active?: boolean }) {
  return (
    <th
      scope="row"
      className={`border-r border-b p-0 align-bottom text-[16px] leading-[18px] font-normal text-[#27413e] ${serif} ${active ? "border-[#f0954a] bg-[#fcd088]" : "border-[#9eb6ce] bg-[#e4ecf7]"}`}
    >
      {n}
    </th>
  );
}

function Sheet() {
  return (
    <div className="relative min-h-0 flex-1 overflow-hidden bg-white">
      <table className="w-[1117px] table-fixed border-separate border-spacing-0 text-black">
        <thead>
          <tr className={`h-5 text-[16px] text-[#27413e] ${serif}`}>
            <th className="relative w-[34px] border-r border-b border-[#9eb6ce] bg-[#a9c4e9] p-0">
              <span className="absolute right-1 bottom-1 border-b-[11px] border-l-[11px] border-b-[#e4ecf7] border-l-transparent" />
            </th>
            {columns.map(([name, width]) => (
              <th
                key={name}
                scope="col"
                className={`border-r border-b border-[#9eb6ce] p-0 leading-[18px] font-normal ${width} ${name === "J" ? "bg-linear-to-b from-[#f8d79b] to-[#f0b95c]" : "bg-linear-to-b from-[#f6fafb] to-[#d5dee9]"}`}
              >
                {name}
              </th>
            ))}
          </tr>
        </thead>
        <tbody>
          <tr className="h-[30px]">
            <RowHead n={10} />
            <td className={`${cell} text-center text-[15px] text-[#1414b8]`}>时可不选)</td>
            <td className={numCell}>3</td>
            <td className={`${cell} pl-0.5 text-[13px] font-bold`}>
              <span className="text-[#e80000]">最小孔铜</span>要求（um）
            </td>
            <td colSpan={2} className={`${cell} bg-[#ebf1de]`}><Flag /></td>
            <td colSpan={3} className={`${cell} text-center text-[13px] font-bold`}>
              客户要求外层完成<span className="text-[#e80000]">铜厚</span>（um）
            </td>
            <td className={`${cell} bg-[#ffff00] text-center text-[13px]`}>≥52.9<Flag /></td>
            <td className={cell} />
          </tr>
          {notes.map((note, i) => (
            <tr key={note.row} className={note.height}>
              <RowHead n={note.row} active={note.row === 15} />
              {i === 0 && (
                <td rowSpan={notes.length} className={`${cell} text-center text-[15px] leading-[18px] text-[#1414b8]`}>
                  <b className="text-[16px] text-black">
                    顾客要求与文
                    <br />
                    件设计不一致
                    <br />
                    <Mixed text="需要CAM更改" />
                    <br />
                    的信息指示
                  </b>
                  (这
                  <br />
                  部分信息客诉
                  <br />
                  的风险最高)
                </td>
              )}
              <td className={numCell}>{note.no}</td>
              <td
                colSpan={7}
                className={`${cell} pl-0.5 text-[14px] leading-4 font-bold whitespace-nowrap ${note.black ? "text-black" : "text-[#e80000]"}`}
              >
                {note.lines.map((line) => (
                  <div key={line} className="h-4">
                    <Mixed text={line} />
                  </div>
                ))}
              </td>
              <td className={`${cell} pl-0.5 text-[15px] ${serif} ${note.link ? "bg-[#92d050]" : ""} ${note.row === 15 ? "outline-1 outline-offset-[-2px] outline-[#5b3a78]" : ""}`}>
                {note.link && (
                  <a href={`#sheet-${note.link}`} className={note.visited ? "text-[#7a1a6e] underline" : "text-[#123d12]"}>
                    图{note.link}!A1
                  </a>
                )}
              </td>
            </tr>
          ))}
          <tr className="h-[52px]">
            <RowHead n={26} />
            <td rowSpan={4} className={`${cell} pt-[66px] text-center align-top text-[15px] leading-[18px] text-[#1414b8]`}>
              <div className="h-[72px]">
                <b className="text-black">工序指示（</b>备
                <br />
                <Mixed text="注需要CAM转化" />
                <br />
                <Mixed text="到ERP中的参数" />
                <br />
                ，生产要求以
              </div>
            </td>
            <td className={numCell}>1</td>
            <td className={`${cell} bg-[#eeece1] text-center text-[13px]`}>Set允许单片报废</td>
            <td className={`${cell} bg-[#d8e4bc]`}><Flag /></td>
            <td colSpan={5} className={`${cell} bg-[#eeece1] pl-0.5 text-[13px] leading-[22px] whitespace-nowrap`}>
              交货数量≤5快，允许1块报废；5＜交货数量≤10快，允许2块报废；10＜交货数量，允许Set中有
              <br />
              20%报废，交货满足总片数。
            </td>
            <td className={cell} />
          </tr>
          <tr className="h-[29px]">
            <RowHead n={27} />
            <td className={numCell}>2</td>
            <td className={`${cell} pl-0.5 text-[13px] font-bold`}>
              <span className="text-[#e80000]">金厚</span>
              <span className="text-[#1010d0]">要求</span>（um）
            </td>
            <td colSpan={2} className={`${cell} bg-[#ebf1de]`}><Flag /></td>
            <td colSpan={4} className={cell} />
            <td className={cell} />
          </tr>
          <tr className="h-[29px]">
            <RowHead n={28} />
            <td className={numCell}>3</td>
            <td colSpan={2} className={`${cell} bg-[#d8e4bc] pr-1 text-center text-[13px] font-bold text-[#1010d0]`}>
              机械盲埋孔/HDI激光盲孔填孔方式
            </td>
            <td colSpan={2} className={`${cell} bg-[#d8e4bc]`}><Flag /></td>
            <td colSpan={3} className={cell} />
            <td className={cell} />
          </tr>
          <tr className="h-[29px]">
            <RowHead n={29} />
            <td className={numCell}>4</td>
            <td className={`${cell} text-center text-[13px] font-bold`}>
              刚挠板是否<span className="text-[#1010d0]">点胶</span>
            </td>
            <td className={`${cell} bg-[#d8e4bc]`}><Flag /></td>
            <td colSpan={4} className={`${cell} text-center text-[13px]`}>刚挠板铜箔类型</td>
            <td className={`${cell} bg-[#d8e4bc]`}><Flag /></td>
            <td className={cell} />
          </tr>
        </tbody>
      </table>
      <svg viewBox="0 0 82 112" className="pointer-events-none absolute top-[218px] left-[780px] h-28 w-[82px]">
        <path d="M12 20L77 107" stroke="#f80000" strokeWidth="5" strokeLinecap="round" />
        <path d="M2 2l23 18-13 9z" fill="#f80000" stroke="#f80000" strokeLinejoin="round" />
      </svg>
    </div>
  );
}

function SheetTab({ name, wide }: { name: string; wide: boolean }) {
  return (
    <button className={`relative flex h-full items-center justify-center pl-2 ${wide ? "w-11" : "w-[37px]"}`}>
      <svg viewBox="0 0 44 17" preserveAspectRatio="none" className="absolute inset-0 size-full" fill="none">
        <path d="M0 17L10 1H44" stroke="#7f9fcb" />
      </svg>
      <span className="relative">{name}</span>
    </button>
  );
}

function SheetTabs() {
  return (
    <div className={`flex h-[17px] shrink-0 bg-linear-to-b from-[#a8c3e8] to-[#8fb0de] text-[15px] leading-4 whitespace-nowrap text-[#1e4485] ${serif}`}>
      <div className="flex w-[62px] items-center justify-around bg-[#dbe8f8]">
        {["M1 0v8M8 0v8L3 4z", "M7 0v8L2 4z", "M2 0v8l5-4z", "M8 0v8M1 0v8l5-4z"].map((d) => (
          <button key={d} aria-label="滚动工作表">
            <svg viewBox="0 0 9 8" className="h-2 w-[9px]" fill="#1e3c78" stroke="#1e3c78">
              <path d={d} />
            </svg>
          </button>
        ))}
      </div>
      <button className="w-[42px] bg-white pl-1">指示</button>
      <div className="flex bg-[#d5e4f7]">
        {Array.from({ length: 14 }, (_, i) => (
          <SheetTab key={i} name={`图${i + 1}`} wide={i > 8} />
        ))}
        <button aria-label="插入工作表" className="relative w-9">
          <svg viewBox="0 0 36 17" className="h-[17px] w-9">
            <path d="M36 0v17H26z" fill="#9bb9e3" />
            <path d="M0 17L10 1H36L26 17" fill="none" stroke="#7f9fcb" />
            <path d="M13 6h12v8H15z" fill="#fff" stroke="#5777ac" />
            <path d="M12 1v7M8.500 4.500h7M9.500 2l5 5M14.500 2l-5 5" stroke="#e09a2c" />
          </svg>
        </button>
      </div>
      <div className="ml-auto flex w-[256px] items-center">
        <span className="h-4 w-1.5 border border-[#7f9fcb] bg-white" />
        <svg viewBox="0 0 6 8" className="ml-2.5 h-2 w-1.5">
          <path d="M6 0v8L0 4z" fill="#3d5f96" />
        </svg>
        <div className="ml-2 flex h-4 flex-1 items-center justify-end gap-0.5 rounded-l-sm border border-r-0 border-[#7b93b5] bg-linear-to-b from-[#eef2f8] to-[#c9d3e2] pr-[26px]">
          <i className="h-2 w-px bg-[#555]" />
          <i className="h-2 w-px bg-[#555]" />
          <i className="h-2 w-px bg-[#555]" />
        </div>
      </div>
    </div>
  );
}

function StatusBar() {
  return (
    <div className="flex h-7 shrink-0 items-center border-t border-[#7f9fcb] bg-linear-to-b from-[#dfebfa] via-[#b4d0f3] to-[#d8e8fb] pl-[7px] text-[15px] text-[#1e4485]">
      就绪
      <span className="ml-2.5 h-6 w-0.5 border-l border-[#8fb0da] bg-white" />
      <div className="ml-auto flex h-full items-center border-l-2 border-white bg-[#b4d0f3] pl-1.5">
        <button aria-label="普通" className={`flex h-6 w-6 items-center justify-center ${hot}`}>
          <svg viewBox="0 0 18 12" className="h-3 w-[18px]" fill="#fff" stroke="#555">
            <path d="M.5.5h17v11H.5zM.5 4h17M.5 8h17M6 0v12M12 0v12" />
          </svg>
        </button>
        <button aria-label="页面布局" className="flex h-6 w-3 items-center overflow-hidden">
          <svg viewBox="0 0 18 16" className="ml-1 h-4 w-[18px] shrink-0" fill="#fff" stroke="#555" strokeWidth="2">
            <path d="M1 1h16v14H1z" />
            <path d="M6 5h8M6 8h8M6 11h8" strokeWidth="1" />
          </svg>
        </button>
      </div>
    </div>
  );
}

function ExcelWindow() {
  return (
    <section className={`absolute top-[77px] right-0 left-[1002px] flex h-[943px] flex-col overflow-hidden bg-white shadow-[0_0_10px_rgba(0,0,0,0.5)] ${ui}`}>
      <OfficeButton />
      <ExcelTitle />
      <RibbonTabs />
      <Ribbon />
      <SecurityBar />
      <FormulaBar />
      <Sheet />
      <SheetTabs />
      <StatusBar />
    </section>
  );
}

export default function App() {
  return (
    <div className="relative flex min-h-screen flex-col overflow-hidden bg-[#ffffcc]">
      <TitleBar />
      <MenuBar />
      <div className="flex flex-1 bg-black">
        <LayerPanel />
        <BoardCanvas />
      </div>
      <CommandBar />
      <div className="mb-[3px] h-8 shrink-0 border-t-2 border-[#5f8f8f] bg-black p-px">
        <div className="h-full border-2 border-t-[#d2ffff] border-r-[#5f9b9b] border-b-[#5f9b9b] border-l-[#d2ffff] bg-[#b2ffff]" />
      </div>
      <Popview />
      <ExcelWindow />
    </div>
  );
}
